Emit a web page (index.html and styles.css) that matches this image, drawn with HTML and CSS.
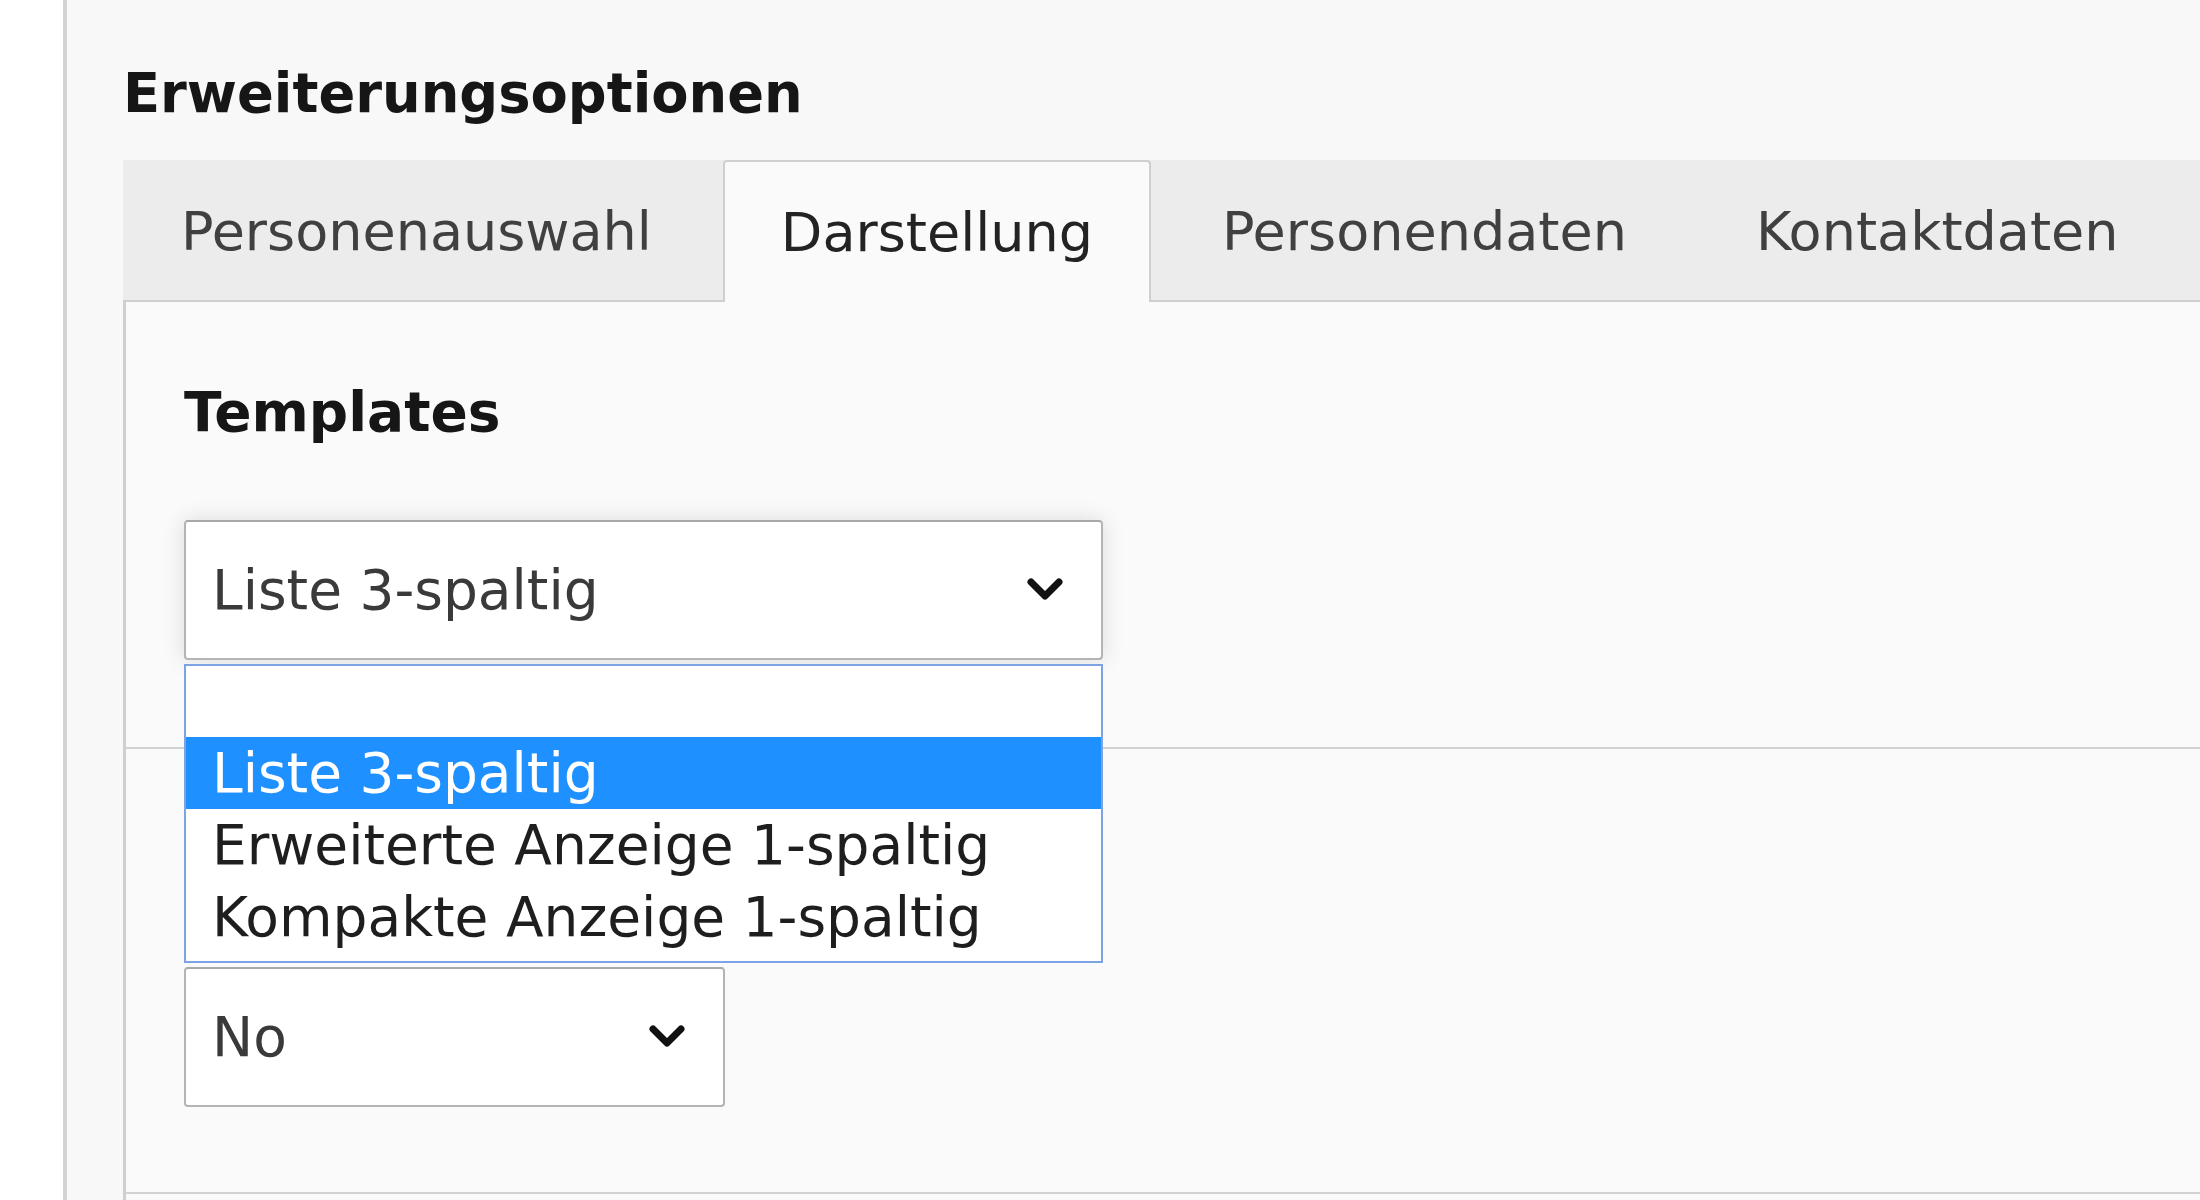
FILE: index.html
```html
<!DOCTYPE html>
<html lang="de">
<head>
<meta charset="utf-8">
<title>Erweiterungsoptionen</title>
<link rel="stylesheet" href="styles.css">
</head>
<body>
<div class="layout">
  <aside class="sidebar"></aside>
  <main class="content">
    <h2 class="section-title">Erweiterungsoptionen</h2>
    <div class="tabs">
      <ul class="tab-nav">
        <li class="tab">Personenauswahl</li>
        <li class="tab active">Darstellung</li>
        <li class="tab">Personendaten</li>
        <li class="tab">Kontaktdaten</li>
      </ul>
      <div class="tab-panel">
        <div class="panel-section first">
          <h3 class="field-title">Templates</h3>
          <div class="select-wrap">
            <div class="select focused">
              <span class="select-value">Liste 3-spaltig</span>
              <svg class="chevron" viewBox="0 0 38 26" aria-hidden="true"><polyline points="5,5 19,19 33,5"/></svg>
            </div>
            <ul class="dropdown">
              <li class="option blank"></li>
              <li class="option selected">Liste 3-spaltig</li>
              <li class="option">Erweiterte Anzeige 1-spaltig</li>
              <li class="option">Kompakte Anzeige 1-spaltig</li>
            </ul>
          </div>
        </div>
        <div class="panel-section second">
          <div class="select small">
            <span class="select-value">No</span>
            <svg class="chevron" viewBox="0 0 38 26" aria-hidden="true"><polyline points="5,5 19,19 33,5"/></svg>
          </div>
        </div>
      </div>
    </div>
  </main>
</div>
</body>
</html>
```

FILE: styles.css
```css
* { box-sizing: border-box; }

html, body {
  margin: 0;
  height: 100%;
  overflow: hidden;
}

body {
  font-family: "DejaVu Sans", Verdana, sans-serif;
  background: #ffffff;
  color: #222222;
}

.layout {
  display: flex;
  height: 100vh;
}

.sidebar {
  flex: none;
  width: 67px;
  background: #ffffff;
  border-right: 4px solid #d3d3d3;
}

.content {
  flex: 1;
  min-width: 0;
  background: #f8f8f8;
  padding: 61px 0 0 56px;
  overflow: hidden;
}

.section-title {
  margin: 0 0 33px;
  font-size: 54.3px;
  line-height: 66px;
  font-weight: bold;
  color: #161616;
}

.tabs {
  margin-right: -40px;
}

.tab-nav {
  display: flex;
  list-style: none;
  margin: 0;
  padding: 0;
  height: 142px;
  background: #ececec;
  border-bottom: 2px solid #cfcfcf;
}

.tab {
  display: flex;
  align-items: center;
  padding: 0 56px;
  margin-right: 13px;
  border: 2px solid transparent;
  border-bottom: 0;
  font-size: 54px;
  color: #404040;
  white-space: nowrap;
}

.tab.active {
  background: #fafafa;
  border-color: #cfcfcf;
  border-radius: 4px 4px 0 0;
  margin-bottom: -2px;
  color: #232323;
}

.tab-panel {
  background: #fafafa;
  border-left: 3px solid #cfcfcf;
  min-height: 1000px;
}

.panel-section {
  padding-left: 58px;
  border-bottom: 2px solid #d2d2d2;
}

.panel-section.first {
  padding-top: 77px;
  padding-bottom: 87px;
}

.panel-section.second {
  padding-top: 218px;
  padding-bottom: 85px;
}

.field-title {
  margin: 0 0 75px;
  font-size: 55px;
  line-height: 66px;
  font-weight: bold;
  color: #161616;
}

.select-wrap {
  position: relative;
  width: 919px;
}

.select {
  display: flex;
  align-items: center;
  justify-content: space-between;
  width: 919px;
  height: 140px;
  padding: 0 37px 0 26px;
  background: #ffffff;
  border: 2px solid #b4b4b4;
  border-top-color: #a8a8a8;
  border-radius: 4px;
  font-size: 55px;
  color: #3a3a3a;
}

.select.focused {
  box-shadow: 0 0 22px rgba(0, 0, 0, 0.13);
}

.select.small {
  width: 541px;
}

.chevron {
  width: 38px;
  height: 26px;
  flex: none;
}

.chevron polyline {
  fill: none;
  stroke: #111111;
  stroke-width: 7;
  stroke-linecap: round;
  stroke-linejoin: round;
}

.dropdown {
  position: absolute;
  left: 0;
  top: 144px;
  z-index: 2;
  width: 919px;
  margin: 0;
  padding: 0 0 8px;
  list-style: none;
  background: #ffffff;
  border: 2px solid #7ea3e4;
}

.option {
  height: 72px;
  line-height: 72px;
  padding-left: 26px;
  font-size: 55px;
  color: #1e1e1e;
  white-space: nowrap;
}

.option.blank {
  height: 71px;
}

.option.selected {
  background: #1e90ff;
  color: #ffffff;
}
```
